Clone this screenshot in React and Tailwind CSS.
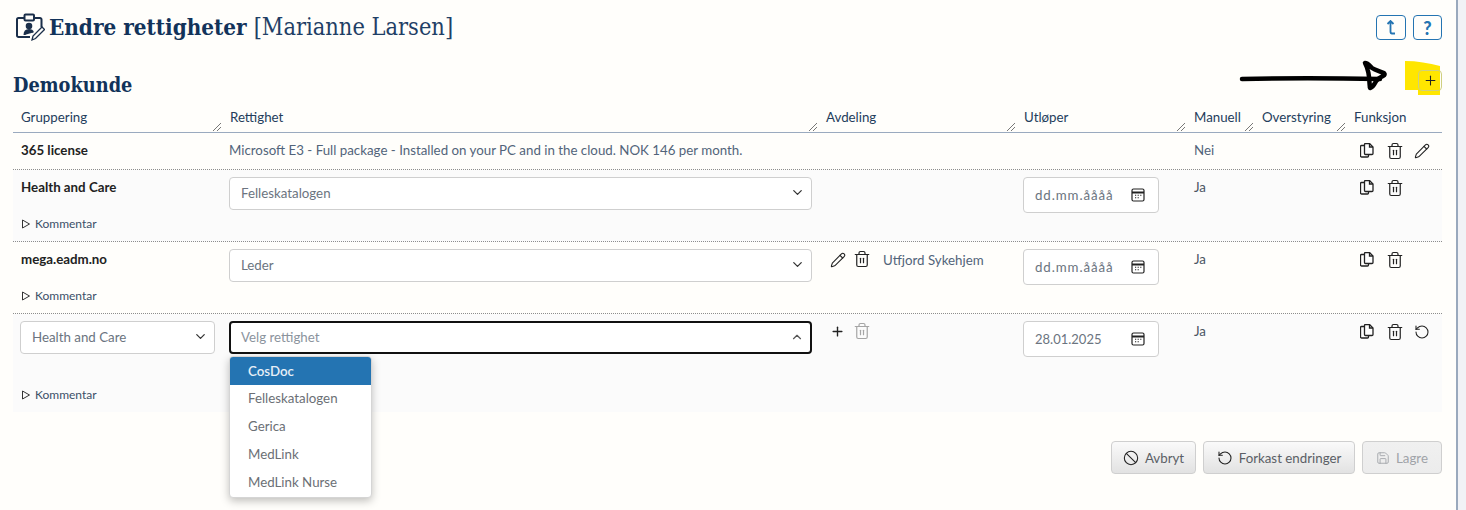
import { Ban, ChevronDown, ChevronUp, Pencil, Plus, RotateCcw, Save, Trash2 } from 'lucide-react';

const COLS = 'grid grid-cols-[209px_596px_198px_170px_68px_92px_96px]';
const SELECT = 'flex items-center justify-between rounded bg-white pl-[11px] pr-[6px] pb-[2px] h-[33px] border border-[#cfcfcf] text-[#6b7480]';

function CopyIcon() {
  return (
    <svg width="14" height="15" viewBox="0 0 14 15" fill="none" stroke="#222" strokeWidth="1.3">
      <path d="M4.5 2.5H1.5a1 1 0 0 0-1 1v9.5a1 1 0 0 0 1 1h6a1 1 0 0 0 1-1v-1" />
      <path d="M4.5 1.5a1 1 0 0 1 1-1h4l3.5 3.5v6.5a1 1 0 0 1-1 1h-6.5a1 1 0 0 1-1-1z" fill="#fff" />
      <path d="M9.5.5V4H13" />
    </svg>
  );
}

function CalendarIcon() {
  return (
    <svg width="14" height="14" viewBox="0 0 14 14" fill="none" stroke="#222" strokeWidth="1.2">
      <rect x="1" y="1" width="12" height="12" rx="1.5" />
      <path d="M1 4.5h12" strokeWidth="2" />
      <path d="M4 7.2h1.2M6.6 7.2h1.2M9.2 7.2h1.2M4 9.8h1.2M6.6 9.8h1.2" strokeWidth="1.1" />
    </svg>
  );
}

function Trash({ className = 'text-[#222]' }) {
  return <Trash2 size={18} strokeWidth={1.6} className={className} />;
}

function Resize() {
  return (
    <svg width="8" height="8" viewBox="0 0 8 8" stroke="#555" strokeWidth="0.8" className="absolute right-[1px] bottom-[1px]">
      <path d="M0 8 8 0M4 8l4-4" />
    </svg>
  );
}

function HeaderCell({ children, handle = true }) {
  return (
    <div className="relative h-[27px] pl-2 pt-[2px] text-[#243d5c]">
      {children}
      {handle && <Resize />}
    </div>
  );
}

function Comment() {
  return (
    <div className="absolute left-2 bottom-[10px] flex items-center gap-[4px] text-[12px] leading-[14px] text-[#3c5068]">
      <svg width="10" height="10" viewBox="0 0 10 10" fill="none" stroke="#333" strokeWidth="1">
        <path d="M1.5 1 8.5 5l-7 4z" />
      </svg>
      Kommentar
    </div>
  );
}

function DateField({ value }) {
  return (
    <div className="flex items-center justify-between ml-[-1px] w-[136px] h-[36px] rounded border border-[#cfcfcf] bg-white pl-[11px] pr-[13px] text-[#6b7480]">
      <span className={value ? 'text-[13px]' : 'tracking-[0.9px]'}>{value || 'dd.mm.åååå'}</span>
      <CalendarIcon />
    </div>
  );
}

function Row({ className = '', first, second, third, date, extra, height }) {
  return (
    <div className={`${COLS} ${height} relative border-b border-dotted border-[#8d8d8d] ${className}`}>
      <div className="pl-2 pr-[7px] pt-[7px]">{first}</div>
      <div className="pl-[7px] pr-[6px] pt-[7px]">{second}</div>
      <div className="pl-[12px] pt-[8px]">{third}</div>
      <div className="pl-2 pt-[7px]">{date}</div>
      <div className="pl-2 pt-[7px] text-[#4a5563]">Ja</div>
      <div />
      <div className="pl-[14px] pt-[10px] flex items-start gap-[12px]">
        <CopyIcon />
        <div className="-mt-px"><Trash /></div>
        {extra}
      </div>
      <Comment />
    </div>
  );
}

function Footer({ children, className = 'text-[#5b5f66]', width }) {
  return (
    <button
      type="button"
      className={`flex items-center justify-center gap-[6px] h-[33px] ${width} rounded border border-[#cfcfcf] bg-gradient-to-b from-[#fafafa] to-[#e2e2e2] ${className}`}
    >
      {children}
    </button>
  );
}

export default function App() {
  return (
    <div className="relative w-[1466px] h-[510px] overflow-hidden bg-[#fffefb] font-['Lato','Noto_Sans',sans-serif] text-[13.3px] leading-[20px]">
      <div className="absolute top-0 right-0 bottom-0 w-[10px] bg-[#f1f2f6] border-l-[2px] border-[#9aa9bd]" />

      <div className="w-[1456px] pl-[13px] pr-[14px]">
        <div className="flex items-start justify-between h-[71px] pt-[12px]">
          <div className="flex items-center gap-[4px] pl-[2px] text-[#12335a] font-['DejaVu_Serif',serif] [font-stretch:condensed]">
            <svg width="30" height="30" viewBox="0 0 30 30" fill="none" stroke="#1b2f4a" strokeWidth="2">
              <path d="M9 6H3.5A1.5 1.5 0 0 0 2 7.5v16A1.5 1.5 0 0 0 3.500 25H15" />
              <path d="M20 6h5a1.500 1.500 0 0 1 1.500 1.500V15" />
              <rect x="9.500" y="2.500" width="9.500" height="6" rx="1" />
              <circle cx="14" cy="14" r="2.300" fill="#1b2f4a" />
              <path d="M9.500 23c0-3.500 2-5 4.500-5s3.500 1 4 2.500" fill="#1b2f4a" />
              <path d="m17 28 1-4 9-9 2.500 2.500-9 9z" strokeWidth="1.300" />
            </svg>
            <span className="text-[22.300px] font-bold leading-[30px]">Endre rettigheter</span>
            <span className="ml-[3px] text-[23.400px] font-light leading-[30px] text-[#1f3f66]">[Marianne Larsen]</span>
          </div>
          <div className="flex gap-[7px] pt-[3px]">
            <button type="button" className="flex items-center justify-center w-[30px] h-[25px] rounded border border-[#2474b2] text-[#2474b2]">
              <svg width="10" height="15" viewBox="0 0 10 15" fill="none" stroke="currentColor" strokeWidth="1.800">
                <path d="M1.500 4 4.500 1l3 3M4.500 1v10.500c0 1.200.6 2 1.500 2h3" />
              </svg>
            </button>
            <button type="button" className="flex items-center justify-center w-[29px] h-[25px] rounded border border-[#2474b2] text-[#2474b2] text-[18px] font-black">?</button>
          </div>
        </div>

        <div className="flex items-center justify-between h-[27px]">
          <h2 className="text-[19.800px] font-bold text-[#12335a] font-['DejaVu_Serif',serif] [font-stretch:condensed]">Demokunde</h2>
          <button type="button" className="relative z-10 flex items-center justify-center -mt-[9px] w-[24px] h-[21px] rounded border border-[#cfcf80] text-[#222]">
            <Plus size={15} strokeWidth={1.700} />
          </button>
        </div>

        <div className={`${COLS} mt-[7px] border-b border-[#9aaabf]`}>
          <HeaderCell>Gruppering</HeaderCell>
          <HeaderCell>Rettighet</HeaderCell>
          <HeaderCell>Avdeling</HeaderCell>
          <HeaderCell>Utløper</HeaderCell>
          <HeaderCell>Manuell</HeaderCell>
          <HeaderCell>Overstyring</HeaderCell>
          <HeaderCell handle={false}>Funksjon</HeaderCell>
        </div>

        <div className={`${COLS} h-[37px] border-b border-dotted border-[#8d8d8d]`}>
          <div className="pl-2 pt-[7px] font-bold text-[#222]">365 license</div>
          <div className="col-span-3 pl-[7px] pt-[7px] text-[#52647a] whitespace-nowrap">Microsoft E3 - Full package - Installed on your PC and in the cloud. NOK 146 per month.</div>
          <div className="col-start-5 pl-2 pt-[7px] text-[#52647a]">Nei</div>
          <div className="col-start-7 pl-[14px] pt-[10px] flex items-start gap-[12px]">
            <CopyIcon />
            <div className="-mt-px"><Trash /></div>
            <Pencil size={16} strokeWidth={1.600} className="text-[#222] -ml-[2px]" />
          </div>
        </div>

        <Row
          height="h-[72px]"
          className="bg-[#fbfbfb]"
          first={<div className="font-bold text-[#222]">Health and Care</div>}
          second={<div className={SELECT}>Felleskatalogen<ChevronDown size={15} strokeWidth={2} className="text-[#333]" /></div>}
          date={<DateField />}
        />
        <Row
          height="h-[72px]"
          first={<div className="font-bold text-[#222]">mega.eadm.no</div>}
          second={<div className={SELECT}>Leder<ChevronDown size={15} strokeWidth={2} className="text-[#333]" /></div>}
          third={
            <div className="flex items-start text-[#52647a] whitespace-nowrap">
              <Pencil size={16} strokeWidth={1.600} className="text-[#222] mt-[2px]" />
              <div className="ml-[7px]"><Trash /></div>
              <span className="ml-[12px]">Utfjord Sykehjem</span>
            </div>
          }
          date={<DateField />}
        />
        <Row
          height="h-[98px]"
          className="bg-[#fbfbfb] !border-b-0"
          first={<div className={`${SELECT} -ml-px`}>Health and Care<ChevronDown size={15} strokeWidth={2} className="text-[#333]" /></div>}
          second={
            <div className="relative">
              <div className="flex items-center justify-between rounded bg-white pl-[10px] pr-[6px] pb-[2px] h-[33px] border-[2px] border-[#111] text-[#8b939d]">Velg rettighet<ChevronUp size={14} strokeWidth={2} className="text-[#555]" /></div>
              <div className="absolute z-20 top-[35px] left-0 w-[143px] rounded border border-[#d5d5d5] bg-white shadow-[0_3px_8px_rgba(0,0,0,0.25)] overflow-hidden text-[#6b6f75]">
                <div className="h-[28px] pl-[18px] pt-[4px] bg-[#2474b2] font-semibold text-[#e6eff7]">CosDoc</div>
                <div className="h-[28px] pl-[18px] pt-[3px]">Felleskatalogen</div>
                <div className="h-[28px] pl-[18px] pt-[3px]">Gerica</div>
                <div className="h-[28px] pl-[18px] pt-[3px]">MedLink</div>
                <div className="h-[28px] pl-[18px] pt-[3px]">MedLink Nurse</div>
              </div>
            </div>
          }
          third={
            <div className="flex items-start">
              <Plus size={15} strokeWidth={2.200} className="text-[#222] mt-[2px]" />
              <div className="ml-[8px]"><Trash className="text-[#a5a5a5]" /></div>
            </div>
          }
          date={<DateField value="28.01.2025" />}
          extra={<RotateCcw size={16} strokeWidth={1.600} className="text-[#222] -ml-[2px]" />}
        />

        <div className="flex justify-end gap-[7px] mt-[29px]">
          <Footer width="w-[85px]"><Ban size={16} strokeWidth={1.600} className="text-[#222]" />Avbryt</Footer>
          <Footer width="w-[152px]"><RotateCcw size={16} strokeWidth={1.600} className="text-[#222]" />Forkast endringer</Footer>
          <Footer width="w-[80px]" className="text-[#a0a3a8] !from-[#f0f0f0] !to-[#ececec]"><Save size={14} strokeWidth={1.500} />Lagre</Footer>
        </div>
      </div>

      <svg width="230" height="50" viewBox="0 0 230 50" fill="none" className="absolute left-[1230px] top-[55px]">
        <path d="M175 6c12 0 24 2 35 5v29h-22v-5h-13z" fill="#ffe600" />
        <path d="M12 24c40-1 90-1 138 0" stroke="#000" strokeWidth="4.500" strokeLinecap="round" />
        <path d="M135 8c3 0 5 3 7 5 3 2 7 3 12 5 1 1 1 2-1 3-4 2-6 3-8 7-1 2-2 4-5 5-1-1 1-14-5-25z" stroke="#000" strokeWidth="4.500" strokeLinejoin="round" />
      </svg>
    </div>
  );
}
